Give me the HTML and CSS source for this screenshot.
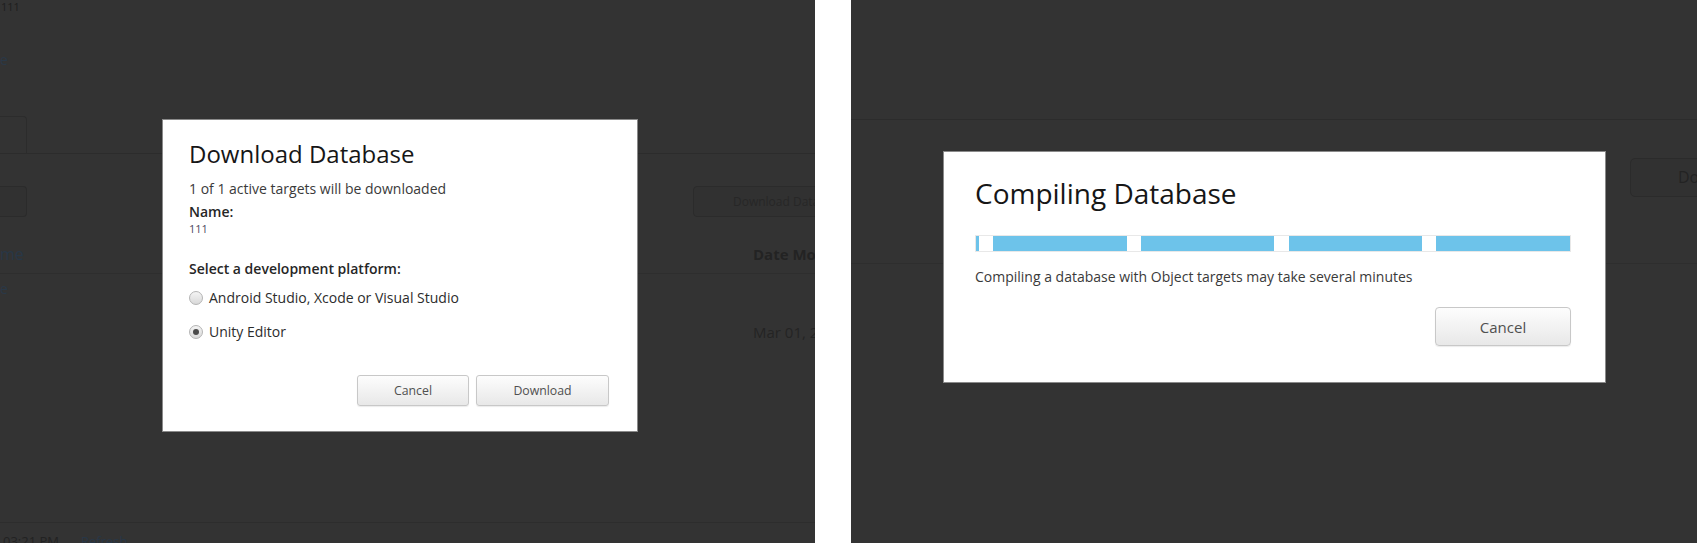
FILE: index.html
```html
<!DOCTYPE html>
<html lang="en">
<head>
<meta charset="utf-8">
<title>Download / Compiling Database</title>
<link rel="stylesheet" href="styles.css">
</head>
<body>
<div class="screen">
  <section class="panel panel-left">
    <div class="page">
      <div class="crumb">111</div>
      <div class="link-frag">e</div>
      <div class="tabs"><div class="tab"></div></div>
      <div class="toolbar">
        <div class="tool-btn tool-btn-left"></div>
        <div class="tool-btn tool-btn-right">Download Database</div>
      </div>
      <div class="table-head">
        <span class="th-name">me</span>
        <span class="th-date">Date Modified</span>
      </div>
      <div class="table-row">
        <span class="td-name">e</span>
        <span class="td-date">Mar 01, 2017</span>
      </div>
      <div class="footer">
        <span class="time">03:21 PM</span>
        <span class="refresh">Refresh</span>
      </div>
    </div>

    <div class="modal modal-download">
      <h2 class="modal-title">Download Database</h2>
      <p class="sub">1 of 1 active targets will be downloaded</p>
      <div class="field-label">Name:</div>
      <div class="field-value">111</div>
      <div class="field-label platform-label">Select a development platform:</div>
      <label class="option"><input type="radio" name="platform" class="radio"><span>Android Studio, Xcode or Visual Studio</span></label>
      <label class="option option-second"><input type="radio" name="platform" class="radio" checked><span>Unity Editor</span></label>
      <div class="actions">
        <button class="btn btn-cancel-sm">Cancel</button>
        <button class="btn btn-download">Download</button>
      </div>
    </div>
  </section>

  <section class="panel panel-right">
    <div class="page page-right">
      <div class="r-header"></div>
      <div class="r-toolbar">
        <div class="r-btn">Download Database</div>
      </div>
      <div class="r-head"></div>
    </div>

    <div class="modal modal-compile">
      <h2 class="modal-title title-lg">Compiling Database</h2>
      <div class="progress"></div>
      <p class="note">Compiling a database with Object targets may take several minutes</p>
      <div class="actions actions-lg">
        <button class="btn btn-cancel-lg">Cancel</button>
      </div>
    </div>
  </section>
</div>
</body>
</html>
```

FILE: styles.css
```css
* { box-sizing: border-box; }

html, body {
  margin: 0;
  padding: 0;
  background: #ffffff;
  font-family: "Open Sans", "Noto Sans", sans-serif;
}

.screen {
  display: flex;
  gap: 36px;
  height: 543px;
  overflow: hidden;
}

.panel {
  position: relative;
  background: #333333;
  overflow: hidden;
  height: 543px;
}

.panel-left { width: 815px; flex: none; }
.panel-right { flex: 1; }

/* ---------- dimmed background page (left) ---------- */
.page {
  display: flex;
  flex-direction: column;
  height: 100%;
}

.crumb {
  font-size: 11px;
  line-height: 13px;
  color: #1e1e1e;
  padding-left: 1px;
}

.link-frag {
  margin-top: 37px;
  font-size: 14px;
  line-height: 20px;
  color: #2a3847;
}

.tabs {
  margin-top: 46px;
  height: 38px;
  border-bottom: 1px solid #2c2c2c;
  display: flex;
}

.tab {
  width: 27px;
  height: 38px;
  border: 1px solid #2c2c2c;
  border-left: none;
  border-bottom: none;
  border-radius: 0 4px 0 0;
}

.toolbar {
  margin-top: 32px;
  height: 31px;
  display: flex;
  justify-content: space-between;
}

.tool-btn {
  height: 31px;
  border: 1px solid #2b2b2b;
  background: #313131;
}

.tool-btn-left {
  width: 27px;
  border-left: none;
  border-radius: 0 4px 4px 0;
}

.tool-btn-right {
  width: 190px;
  margin-right: -68px;
  border-radius: 4px;
  padding-left: 39px;
  font-size: 12px;
  line-height: 29px;
  color: #272727;
  white-space: nowrap;
}

.table-head {
  display: grid;
  grid-template-columns: 753px 1fr;
  padding-top: 26px;
  padding-bottom: 8px;
  border-bottom: 1px solid #2e2e2e;
  font-size: 15px;
  line-height: 22px;
  white-space: nowrap;
}

.th-name { color: #283747; font-size: 16px; }
.th-date { color: #232323; font-weight: 700; }

.table-row {
  display: grid;
  grid-template-columns: 753px 1fr;
  white-space: nowrap;
}

.td-name {
  padding-top: 5px;
  font-size: 14px;
  line-height: 20px;
  color: #2a3847;
}

.td-date {
  padding-top: 47px;
  font-size: 15px;
  line-height: 22px;
  color: #242424;
}

.footer {
  margin-top: auto;
  height: 21px;
  border-top: 1px solid #2d2d2d;
  padding-top: 9px;
  padding-left: 3px;
  display: flex;
  gap: 22px;
  font-size: 13px;
  line-height: 18px;
  white-space: nowrap;
  overflow: hidden;
}

.time { color: #222222; }
.refresh { color: #283747; }

/* ---------- dimmed background page (right) ---------- */
.r-header {
  height: 120px;
  border-bottom: 1px solid #2c2c2c;
  flex: none;
}

.r-toolbar {
  margin-top: 38px;
  height: 39px;
  display: flex;
  justify-content: flex-end;
  flex: none;
}

.r-btn {
  width: 200px;
  margin-right: -133px;
  height: 39px;
  border: 1px solid #2b2b2b;
  border-radius: 5px;
  background: #313131;
  padding-left: 47px;
  font-size: 16px;
  line-height: 37px;
  color: #232323;
  white-space: nowrap;
  overflow: hidden;
}

.r-head {
  height: 67px;
  border-bottom: 1px solid #2e2e2e;
  flex: none;
}

/* ---------- modals ---------- */
.modal {
  position: absolute;
  background: #ffffff;
  border: 1px solid #8a8a8a;
  display: flex;
  flex-direction: column;
}

.modal-title {
  margin: 0;
  font-weight: 500;
  font-size: 24px;
  line-height: 32px;
  color: #161616;
}

.modal-download {
  left: 162px;
  top: 119px;
  width: 476px;
  height: 313px;
  padding: 18px 28px 0 26px;
}

.sub {
  margin: 9px 0 0;
  font-size: 14px;
  line-height: 20px;
  color: #3a3a3a;
}

.field-label {
  margin-top: 3px;
  font-size: 14px;
  line-height: 20px;
  font-weight: 600;
  color: #262626;
}

.field-value {
  font-size: 11px;
  line-height: 14px;
  color: #4d4860;
}

.platform-label { margin-top: 23px; }

.option {
  margin-top: 9px;
  display: flex;
  align-items: center;
  gap: 6px;
  font-size: 14px;
  line-height: 20px;
  color: #2c2c2c;
}

.option-second { margin-top: 14px; }

.radio {
  appearance: none;
  -webkit-appearance: none;
  margin: 0;
  width: 14px;
  height: 14px;
  border-radius: 50%;
  border: 1px solid #b4b4b4;
  background: linear-gradient(#f4f4f4, #d9d9d9);
  display: grid;
  place-content: center;
  flex: none;
}

.radio:checked::before {
  content: "";
  width: 6px;
  height: 6px;
  border-radius: 50%;
  background: #4a4a4a;
}

.actions {
  margin-top: 33px;
  display: flex;
  justify-content: flex-end;
  gap: 7px;
}

.btn {
  font-family: "Open Sans", "Noto Sans", sans-serif;
  color: #505050;
  background: linear-gradient(#fdfdfd, #e8e8e8);
  border: 1px solid #c8c8c8;
  border-radius: 3px;
  box-shadow: 0 1px 1px rgba(0, 0, 0, 0.08);
  padding: 0;
}

.btn-cancel-sm { width: 112px; height: 31px; font-size: 12.3px; }
.btn-download { width: 133px; height: 31px; font-size: 12.3px; }

.modal-compile {
  left: 92px;
  top: 151px;
  width: 663px;
  height: 232px;
  padding: 23px 34px 0 31px;
}

.title-lg {
  font-size: 28px;
  line-height: 36px;
}

.progress {
  margin-top: 24px;
  height: 17px;
  border: 1px solid #e8e8e8;
  background-color: #ffffff;
  background-image: repeating-linear-gradient(90deg,
    #6dc3ea 0px 3px,
    transparent 3px 17.3px,
    #6dc3ea 17.3px 147.7px);
  background-clip: padding-box;
}

.note {
  margin: 15px 0 0;
  font-size: 14px;
  line-height: 20px;
  color: #3a3a3a;
}

.actions-lg { margin-top: 20px; }

.btn-cancel-lg {
  width: 136px;
  height: 39px;
  font-size: 15px;
  border-radius: 4px;
}
```
